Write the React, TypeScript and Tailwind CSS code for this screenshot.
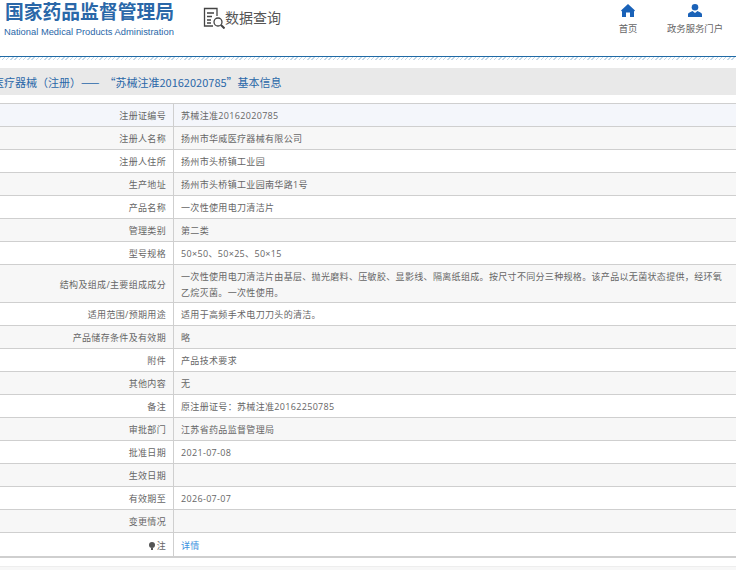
const rows: { label: string; value?: string; tall?: boolean; link?: boolean }[] = [
  { label: "注册证编号", value: "苏械注准20162020785" },
  { label: "注册人名称", value: "扬州市华威医疗器械有限公司" },
  { label: "注册人住所", value: "扬州市头桥镇工业园" },
  { label: "生产地址", value: "扬州市头桥镇工业园南华路1号" },
  { label: "产品名称", value: "一次性使用电刀清洁片" },
  { label: "管理类别", value: "第二类" },
  { label: "型号规格", value: "50×50、50×25、50×15" },
  {
    label: "结构及组成/主要组成成分",
    value: "一次性使用电刀清洁片由基层、抛光磨料、压敏胶、显影线、隔离纸组成。按尺寸不同分三种规格。该产品以无菌状态提供，经环氧乙烷灭菌。一次性使用。",
    tall: true,
  },
  { label: "适用范围/预期用途", value: "适用于高频手术电刀刀头的清洁。" },
  { label: "产品储存条件及有效期", value: "略" },
  { label: "附件", value: "产品技术要求" },
  { label: "其他内容", value: "无" },
  { label: "备注", value: "原注册证号：苏械注准20162250785" },
  { label: "审批部门", value: "江苏省药品监督管理局" },
  { label: "批准日期", value: "2021-07-08" },
  { label: "生效日期" },
  { label: "有效期至", value: "2026-07-07" },
  { label: "变更情况" },
  { label: "注", value: "详情", link: true },
];

function Row({ row, index }: { row: (typeof rows)[number]; index: number }) {
  return (
    <div
      className={
        "flex " +
        (row.link ? "h-[25px] border-b-2 border-[#cfcfcf] " : "border-b border-[#cfcfcf] " + (row.tall ? "h-[38px] " : "h-[23px] ")) +
        (index === 0 ? "bg-[#f4f6fb]" : index % 2 === 0 ? "bg-white" : "bg-[#f7f7f7]")
      }
    >
      <div className="w-[174px] shrink-0 flex items-center justify-end pr-[7px] pt-[2px] border-r border-[#cfcfcf] text-[#666]">
        {row.link && (
          <span className="flex flex-col items-center mr-[2px]">
            <span className="w-[6px] h-[6px] rounded-full bg-[#555]"></span>
            <span className="w-[2px] h-[2px] bg-[#555]"></span>
          </span>
        )}
        {row.label}
      </div>
      <div className={"flex-1 flex items-center pl-[7px] pr-[12px] pt-[2px] leading-[16px] " + (row.link ? "text-[#3b8fe0]" : "text-[#666]")}>
        <span>{row.value}</span>
      </div>
    </div>
  );
}

export default function App() {
  return (
    <div className="w-[736px] h-[570px] overflow-hidden bg-white text-[9px] tracking-[0.33px] font-['Open_Sans','Noto_Sans_CJK_SC',sans-serif]">
      <header className="h-[56px] flex items-start tracking-normal">
        <div className="w-[203px] pl-[5px] pt-[1px] shrink-0 font-['Liberation_Sans','Noto_Sans_CJK_SC',sans-serif]">
          <div className="text-[18.8px] leading-[24px] font-bold text-[#2a67a8] whitespace-nowrap">国家药品监督管理局</div>
          <div className="ml-[-1px] text-[9.35px] leading-[12px] mt-[1px] text-[#2a67a8] whitespace-nowrap">National Medical Products Administration</div>
        </div>
        <div className="flex items-center pt-[7px]">
          <svg width="22" height="22" viewBox="0 0 22 22" fill="none" stroke="#444" strokeWidth="1.3">
            <path d="M10 19H1.5V1.5H14V9" />
            <path d="M4 6H11M4 9.5H9M4 13H8M4 16H8" />
            <circle cx="15" cy="15" r="4" />
            <path d="M18 18L21.5 21.5" strokeWidth="2" />
          </svg>
          <span className="text-[14px] leading-[20px] text-[#555] whitespace-nowrap">数据查询</span>
        </div>
        <nav className="ml-auto flex text-[#666] text-[9.33px]">
          <div className="w-[50px] mr-[1px] flex flex-col items-center pt-[4px]">
            <svg width="14" height="13" viewBox="0 0 14 13" fill="#1a62b8">
              <path d="M7 0L14 6.5L13 7.5V13H9V8.5H5V13H1V7.5L0 6.5Z" />
            </svg>
            <span className="mt-[5px] leading-[14px]">首页</span>
          </div>
          <div className="w-[82px] flex flex-col items-center pt-[4px]">
            <svg width="14" height="13" viewBox="0 0 14 13" fill="#1a62b8">
              <circle cx="7" cy="3.3" r="3.3" />
              <path d="M0 13V10.5C0 8.5 3 8 4.5 7L7 9L9.5 7C11 8 14 8.5 14 10.5V13Z" />
            </svg>
            <span className="mt-[5px] leading-[14px] whitespace-nowrap">政务服务门户</span>
          </div>
        </nav>
      </header>
      <div className="h-[1px] bg-[#1f6aa5]"></div>
      <div className="h-[3px] bg-[repeating-linear-gradient(135deg,#c3d8e8_0,#c3d8e8_1px,#ffffff_1px,#ffffff_3px)]"></div>
      <div className="mt-[8px] h-[27px] bg-[#e9e9e9] flex items-center pt-[1px] overflow-hidden tracking-normal">
        <span className="ml-[-7px] text-[11px] text-[#2a67a8] whitespace-nowrap font-['Noto_Sans_CJK_SC',sans-serif]">
          医疗器械（注册）——<span className="ml-[5px]">“苏械注准20162020785”基本信息</span>
        </span>
      </div>
      <div className="mt-[8px] border-t border-[#cfcfcf]">
        {rows.map((row, i) => (
          <Row key={row.label} row={row} index={i} />
        ))}
      </div>
      <div className="mt-[8px] h-[6px] bg-[#f7f7f7] border-t border-[#eeeeee]"></div>
    </div>
  );
}
